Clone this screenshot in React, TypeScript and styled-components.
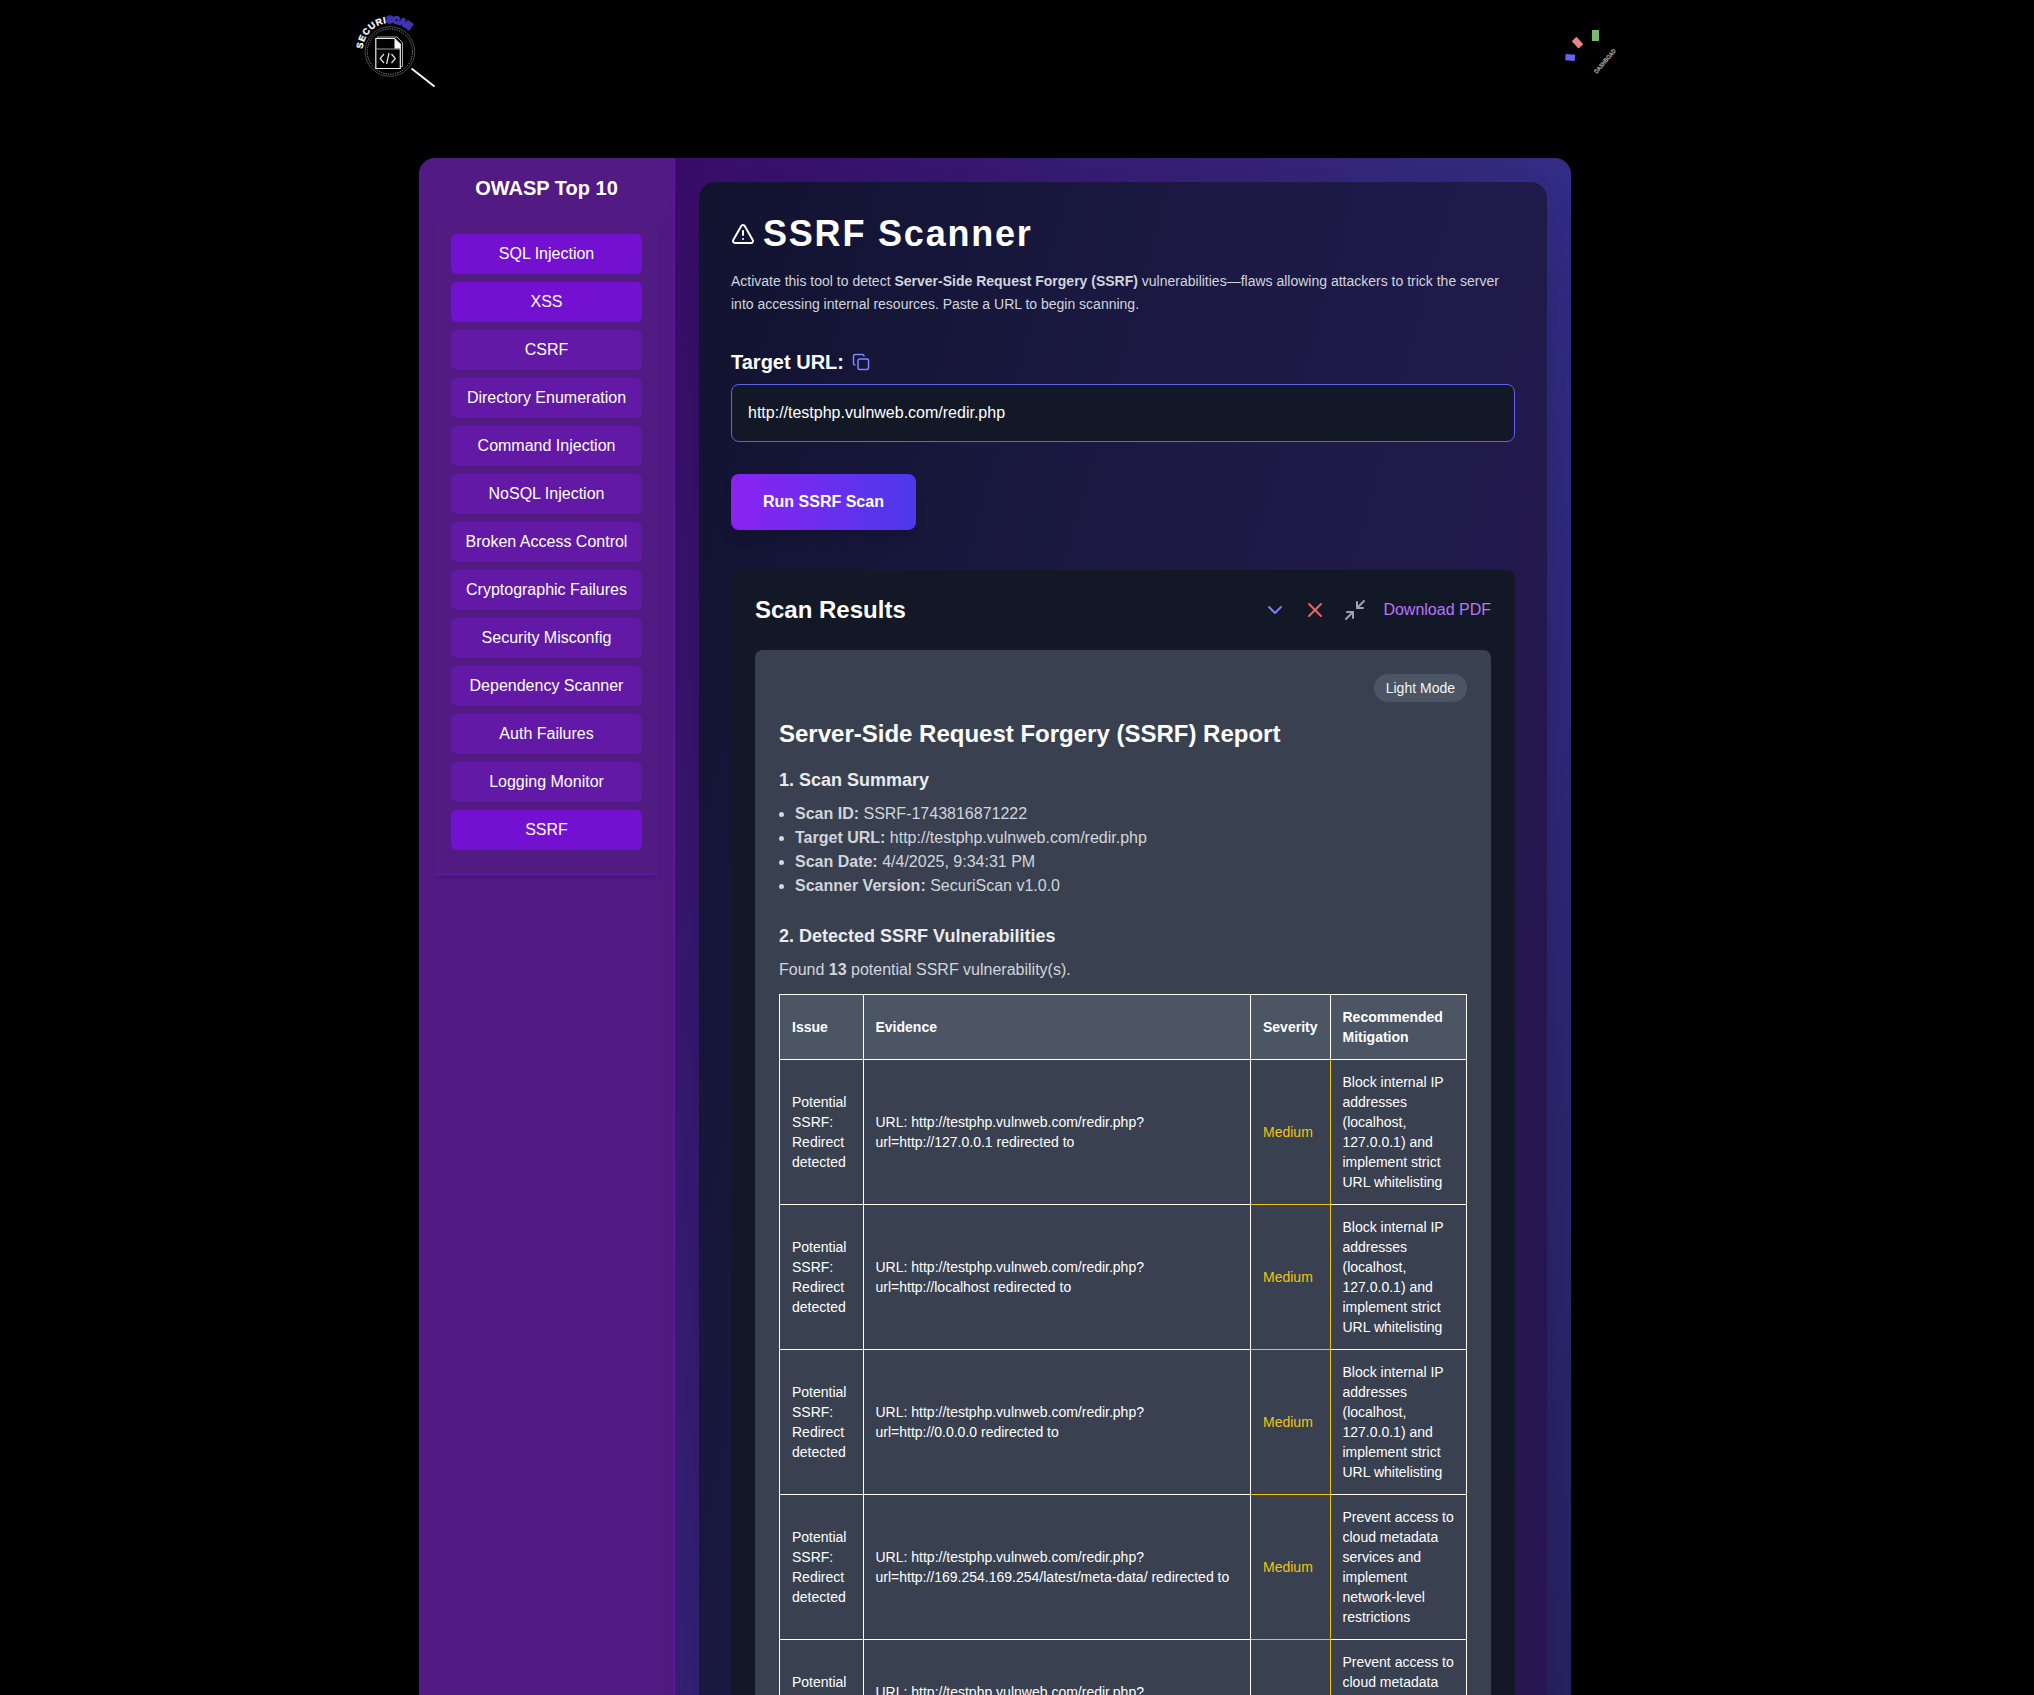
import React from "react";
import styled, { createGlobalStyle } from "styled-components";
import { TriangleAlert, Copy, ChevronDown, X, Minimize2 } from "lucide-react";

const GlobalStyle = createGlobalStyle`
  *, *::before, *::after { box-sizing: border-box; }
  html, body { margin: 0; background: #000; }
  body {
    font-family: "Liberation Sans", Arial, sans-serif;
    font-size: 16px;
    line-height: 24px;
    color: #fff;
  }
  h1, h2, h3, p, ul { margin: 0; }
  button, input { font: inherit; color: inherit; border: 0; }
`;

const Page = styled.div`
  height: 100vh;
  overflow: hidden;
  background: #000;
`;

const TopBar = styled.header`
  display: flex;
  justify-content: space-between;
  align-items: flex-start;
  height: 158px;
  padding: 0 404px 0 340px;
`;

const Shell = styled.div`
  display: flex;
  width: 1152px;
  height: 3180px;
  margin-left: 419px;
  border-radius: 16px;
  overflow: hidden;
  background: linear-gradient(to bottom right, #3a0361, #332a7c 46%, #312c85 50%, #19193a);
`;

const Sidebar = styled.aside`
  width: 256px;
  flex: none;
  padding: 16px;
  background: #521b83;
  border-right: 1px solid #6419a8;
`;

const SidebarTitle = styled.h2`
  font-size: 20px;
  line-height: 28px;
  text-align: center;
  margin-bottom: 16px;
`;

const Nav = styled.nav`
  display: flex;
  flex-direction: column;
  gap: 8px;
  padding: 16px 16px 24px;
  border-bottom: 1px solid #6419a8;
  box-shadow: 0 4px 6px -1px rgba(0, 0, 0, 0.1), 0 2px 4px -2px rgba(0, 0, 0, 0.1);
`;

const NavButton = styled.button<{ $strong?: boolean }>`
  height: 40px;
  padding: 0;
  border-radius: 6px;
  white-space: nowrap;
  background: ${(p) => (p.$strong ? "#7410d0" : "#6219a6")};
`;

const Main = styled.main`
  flex: 1;
  padding: 24px;
`;

const Card = styled.section`
  height: 3100px;
  padding: 32px;
  border-radius: 16px;
  background: linear-gradient(
    to bottom right,
    #11132f,
    #1b1943 30%,
    #201a4a 50%,
    #25174f 60%,
    #281652 75%,
    #2c1058
  );
  box-shadow: 0 25px 50px -12px rgba(0, 0, 0, 0.25);
`;

const Title = styled.h1`
  display: flex;
  align-items: center;
  gap: 8px;
  font-size: 36px;
  line-height: 40px;
  letter-spacing: 1.8px;
`;

const Intro = styled.p`
  margin-top: 16px;
  font-size: 14px;
  line-height: 23px;
  color: #d1d5dc;
`;

const FieldLabel = styled.label`
  display: flex;
  align-items: center;
  gap: 8px;
  margin-top: 32px;
  font-size: 20px;
  line-height: 28px;
  font-weight: 700;
`;

const UrlInput = styled.input`
  display: block;
  width: 100%;
  height: 58px;
  margin-top: 8px;
  padding: 16px;
  border: 1px solid #605ef4;
  border-radius: 8px;
  background: #121826;
  outline: none;
`;

const RunButton = styled.button`
  display: block;
  height: 56px;
  margin-top: 32px;
  padding: 0 32px;
  border-radius: 8px;
  font-weight: 700;
  background: linear-gradient(to right, #8c22f2, #4b39ec);
  box-shadow: 0 10px 15px -3px rgba(0, 0, 0, 0.1), 0 4px 6px -4px rgba(0, 0, 0, 0.1);
`;

const Results = styled.section`
  margin-top: 40px;
  padding: 24px;
  border-radius: 8px;
  background: #121826;
`;

const ResultsHead = styled.div`
  display: flex;
  justify-content: space-between;
  align-items: center;
  margin-bottom: 24px;
`;

const Heading = styled.h2`
  font-size: 24px;
  line-height: 32px;
`;

const Actions = styled.div`
  display: flex;
  align-items: center;
  gap: 16px;
  color: #b974f8;
`;

const Report = styled.article`
  padding: 24px;
  border-radius: 8px;
  background: #394150;
  color: #d1d5dc;
`;

const ModeRow = styled.div`
  display: flex;
  justify-content: flex-end;
  margin-bottom: 16px;
`;

const ModeButton = styled.button`
  height: 28px;
  padding: 0 12px;
  border-radius: 14px;
  font-size: 14px;
  line-height: 20px;
  background: #4c5563;
  color: #f3f4f6;
`;

const ReportTitle = styled(Heading)`
  color: #fff;
  margin-bottom: 16px;
`;

const SubHeading = styled.h3`
  margin-bottom: 8px;
  font-size: 18px;
  line-height: 28px;
  color: #e9ebef;
`;

const SummaryList = styled.ul`
  padding-left: 16px;
  margin-bottom: 24px;
  list-style: disc;
`;

const Table = styled.table`
  width: 688px;
  margin-top: 12px;
  table-layout: fixed;
  border-collapse: collapse;
  font-size: 14px;
  line-height: 20px;
  color: #fff;
`;

const Col = styled.col<{ $w: number }>`
  width: ${(p) => p.$w}px;
`;

const Th = styled.th`
  padding: 12px 8px 12px 12px;
  border: 1px solid #fff;
  text-align: left;
  background: #4c5563;

  &:nth-child(even) {
    padding-left: 11.5px;
  }
`;

const Td = styled.td<{ $medium?: boolean }>`
  padding: 12px 8px 12px 12px;
  height: 145px;
  border: 1px solid;
  color: ${(p) => (p.$medium ? "#f3c30c" : "#fff")};

  &:nth-child(even) {
    padding-left: 11.5px;
  }
`;

const Mark = styled.svg`
  display: block;
`;

const navItems: [string, boolean][] = [
  ["SQL Injection", true],
  ["XSS", true],
  ["CSRF", false],
  ["Directory Enumeration", false],
  ["Command Injection", false],
  ["NoSQL Injection", false],
  ["Broken Access Control", false],
  ["Cryptographic Failures", false],
  ["Security Misconfig", false],
  ["Dependency Scanner", false],
  ["Auth Failures", false],
  ["Logging Monitor", false],
  ["SSRF", true],
];

const blockInternal =
  "Block internal IP addresses (localhost, 127.0.0.1) and implement strict URL whitelisting";
const preventMetadata =
  "Prevent access to cloud metadata services and implement network-level restrictions";

const findings = [
  { target: "http://127.0.0.1", fix: blockInternal },
  { target: "http://localhost", fix: blockInternal },
  { target: "http://0.0.0.0", fix: blockInternal },
  { target: "http://169.254.169.254/latest/meta-data/", fix: preventMetadata },
  { target: "http://metadata.google.internal/computeMetadata/v1/", fix: preventMetadata },
];

function Logo() {
  return (
    <Mark width="120" height="100" viewBox="0 0 120 100" fill="none">
      <defs>
        <path id="logo-arc" d="M 22.6 49 A 28 28 0 0 1 76 39" />
      </defs>
      <text fontSize="9" fontWeight="700" fill="#fff" stroke="#fff" strokeWidth="0.3" letterSpacing="0.75">
        <textPath href="#logo-arc">
          SECURI
          <tspan fill="#3d35b0" stroke="#3d35b0" strokeWidth="2.2" letterSpacing="-0.5">SCAN</tspan>
        </textPath>
      </text>
      <circle cx="49.9" cy="51.5" r="24.8" stroke="#4a4a4a" strokeWidth="1" />
      <circle cx="49.9" cy="51.5" r="22.6" stroke="#9a9a9a" strokeWidth="1" strokeDasharray="1.2 1.2" />
      <path d="M37.5 38.5V37H57l5.5 5.5V66.5H61" stroke="#aaa" strokeWidth="1" />
      <path d="M35.8 38.5H54.5L60.3 44.3V68.5H35.8Z" stroke="#eee" strokeWidth="1.2" />
      <path d="M35.8 49H60.3" stroke="#999" strokeWidth="1" />
      <path d="M54.5 39.5V48.5H60.3V44Z" fill="#fff" />
      <path d="M44 54l-3.8 4.5L44 63M51.5 54l3.8 4.5L51.5 63M49 53l-2.4 11" stroke="#e4e4e4" strokeWidth="1.2" />
      <path d="M71.5 68.5L94.5 86.5" stroke="#fff" strokeWidth="1.8" />
    </Mark>
  );
}

function DashboardMark() {
  return (
    <Mark width="90" height="90" viewBox="0 0 90 90">
      <rect x="52" y="30" width="7" height="11" fill="#7cb872" />
      <rect x="-5" y="-3.2" width="10" height="6.4" transform="translate(37.5 42.7) rotate(47)" fill="#ee8585" />
      <rect x="-4.8" y="-3.2" width="9.6" height="6.4" transform="translate(30.2 57.5) rotate(5)" fill="#6563f0" />
      <text
        transform="translate(56.8 74) rotate(-49.5)"
        fontSize="6"
        fontWeight="700"
        fill="#a8a8a8"
        stroke="#a8a8a8"
        strokeWidth="0.2"
        textLength="30"
        lengthAdjust="spacingAndGlyphs"
      >
        DASHBOAD
      </text>
    </Mark>
  );
}

export default function App() {
  return (
    <Page>
      <GlobalStyle />
      <TopBar>
        <Logo />
        <DashboardMark />
      </TopBar>
      <Shell>
        <Sidebar>
          <SidebarTitle>OWASP Top 10</SidebarTitle>
          <Nav>
            {navItems.map(([label, strong]) => (
              <NavButton key={label} $strong={strong}>
                {label}
              </NavButton>
            ))}
          </Nav>
        </Sidebar>
        <Main>
          <Card>
            <Title>
              <TriangleAlert size={24} />
              SSRF Scanner
            </Title>
            <Intro>
              Activate this tool to detect <strong>Server-Side Request Forgery (SSRF)</strong>{" "}
              vulnerabilities—flaws allowing attackers to trick the server into accessing internal
              resources. Paste a URL to begin scanning.
            </Intro>
            <FieldLabel>
              Target URL:
              <Copy size={18} color="#7c86ff" />
            </FieldLabel>
            <UrlInput defaultValue="http://testphp.vulnweb.com/redir.php" />
            <RunButton>Run SSRF Scan</RunButton>
            <Results>
              <ResultsHead>
                <Heading>Scan Results</Heading>
                <Actions>
                  <ChevronDown size={24} color="#7a80f5" />
                  <X size={24} color="#ee6464" />
                  <Minimize2 size={24} color="#9ca3af" />
                  <span>Download PDF</span>
                </Actions>
              </ResultsHead>
              <Report>
                <ModeRow>
                  <ModeButton>Light Mode</ModeButton>
                </ModeRow>
                <ReportTitle>Server-Side Request Forgery (SSRF) Report</ReportTitle>
                <SubHeading>1. Scan Summary</SubHeading>
                <SummaryList>
                  <li><strong>Scan ID:</strong> SSRF-1743816871222</li>
                  <li><strong>Target URL:</strong> http://testphp.vulnweb.com/redir.php</li>
                  <li><strong>Scan Date:</strong> 4/4/2025, 9:34:31 PM</li>
                  <li><strong>Scanner Version:</strong> SecuriScan v1.0.0</li>
                </SummaryList>
                <SubHeading>2. Detected SSRF Vulnerabilities</SubHeading>
                <p>Found <strong>13</strong> potential SSRF vulnerability(s).</p>
                <Table>
                  <colgroup>
                    <Col $w={84} />
                    <Col $w={387} />
                    <Col $w={80} />
                    <Col $w={136} />
                  </colgroup>
                  <thead>
                    <tr>
                      <Th>Issue</Th>
                      <Th>Evidence</Th>
                      <Th>Severity</Th>
                      <Th>Recommended Mitigation</Th>
                    </tr>
                  </thead>
                  <tbody>
                    {findings.map((f) => (
                      <tr key={f.target}>
                        <Td>Potential SSRF: Redirect detected</Td>
                        <Td>
                          URL: http://testphp.vulnweb.com/redir.php?
                          <wbr />
                          url={f.target} redirected to
                        </Td>
                        <Td $medium>Medium</Td>
                        <Td>{f.fix}</Td>
                      </tr>
                    ))}
                  </tbody>
                </Table>
              </Report>
            </Results>
          </Card>
        </Main>
      </Shell>
    </Page>
  );
}
